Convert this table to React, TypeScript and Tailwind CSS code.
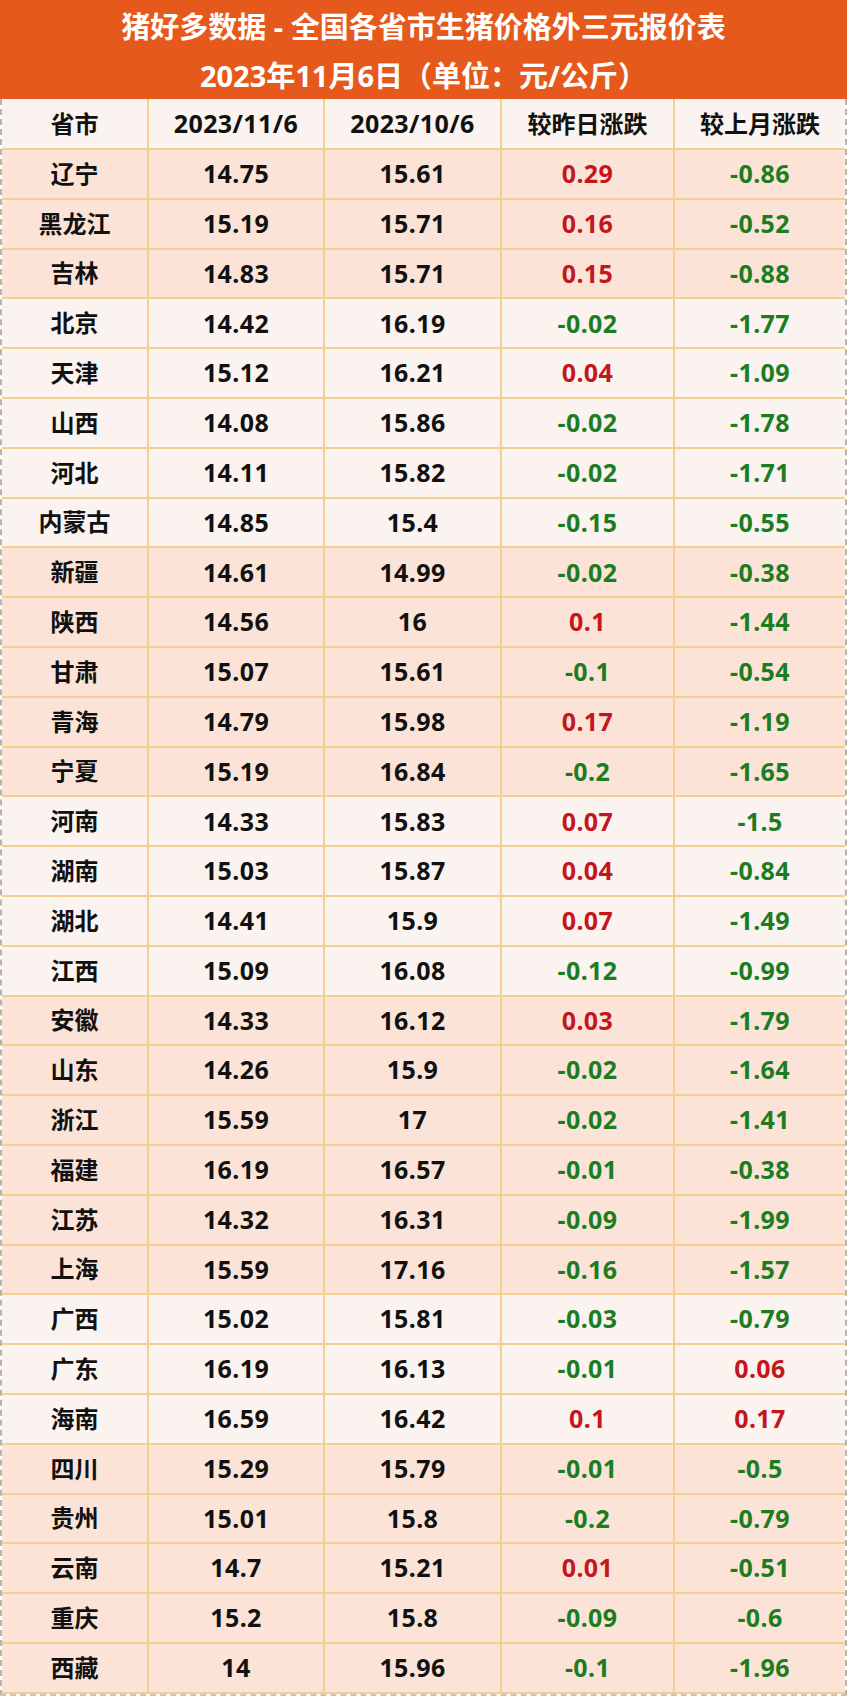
import React from 'react';

type Row = [string, string, string, string, string];

const rows: Row[] = [
  ['辽宁', '14.75', '15.61', '0.29', '-0.86'],
  ['黑龙江', '15.19', '15.71', '0.16', '-0.52'],
  ['吉林', '14.83', '15.71', '0.15', '-0.88'],
  ['北京', '14.42', '16.19', '-0.02', '-1.77'],
  ['天津', '15.12', '16.21', '0.04', '-1.09'],
  ['山西', '14.08', '15.86', '-0.02', '-1.78'],
  ['河北', '14.11', '15.82', '-0.02', '-1.71'],
  ['内蒙古', '14.85', '15.4', '-0.15', '-0.55'],
  ['新疆', '14.61', '14.99', '-0.02', '-0.38'],
  ['陕西', '14.56', '16', '0.1', '-1.44'],
  ['甘肃', '15.07', '15.61', '-0.1', '-0.54'],
  ['青海', '14.79', '15.98', '0.17', '-1.19'],
  ['宁夏', '15.19', '16.84', '-0.2', '-1.65'],
  ['河南', '14.33', '15.83', '0.07', '-1.5'],
  ['湖南', '15.03', '15.87', '0.04', '-0.84'],
  ['湖北', '14.41', '15.9', '0.07', '-1.49'],
  ['江西', '15.09', '16.08', '-0.12', '-0.99'],
  ['安徽', '14.33', '16.12', '0.03', '-1.79'],
  ['山东', '14.26', '15.9', '-0.02', '-1.64'],
  ['浙江', '15.59', '17', '-0.02', '-1.41'],
  ['福建', '16.19', '16.57', '-0.01', '-0.38'],
  ['江苏', '14.32', '16.31', '-0.09', '-1.99'],
  ['上海', '15.59', '17.16', '-0.16', '-1.57'],
  ['广西', '15.02', '15.81', '-0.03', '-0.79'],
  ['广东', '16.19', '16.13', '-0.01', '0.06'],
  ['海南', '16.59', '16.42', '0.1', '0.17'],
  ['四川', '15.29', '15.79', '-0.01', '-0.5'],
  ['贵州', '15.01', '15.8', '-0.2', '-0.79'],
  ['云南', '14.7', '15.21', '0.01', '-0.51'],
  ['重庆', '15.2', '15.8', '-0.09', '-0.6'],
  ['西藏', '14', '15.96', '-0.1', '-1.96'],
];

// regions alternate pink / light background
const lightRows = new Set([3, 4, 5, 6, 7, 13, 14, 15, 16, 23, 24, 25]);

const gridCols = 'grid grid-cols-[147px_176px_177px_173px_1fr]';
const cellBase = 'flex items-center justify-center border-r-2 border-b-2 border-[#f4cf8f] last:border-r-0';

function Cell({ children, className = '' }: { children: React.ReactNode; className?: string }) {
  return <div className={`${cellBase} ${className}`}>{children}</div>;
}

function changeColor(v: string) {
  return v.startsWith('-') ? 'text-[#1b7d1f]' : 'text-[#c4161c]';
}

const num = 'text-[25px] tracking-[0.4px]';

export default function App() {
  return (
    <div
      className="w-[847px] h-[1699px] bg-white font-bold text-[24px] text-[#111]"
      style={{ fontFamily: '"Noto Sans", "Noto Sans CJK SC", sans-serif' }}
    >
      <header className="h-[99px] bg-[#e55a1c] text-white text-[29px] leading-none flex flex-col items-center justify-center gap-[20px] pt-[2px]">
        <div>猪好多数据 - 全国各省市生猪价格外三元报价表</div>
        <div>2023年11月6日（单位：元/公斤）</div>
      </header>
      <div className="border-x-2 border-b-2 border-dashed border-x-[#b9b3ae] border-b-[#c9c3be]">
        <div className={`${gridCols} h-[51px] bg-[#faf3ef]`}>
          <Cell>省市</Cell>
          <Cell className={num}>2023/11/6</Cell>
          <Cell className={num}>2023/10/6</Cell>
          <Cell>较昨日涨跌</Cell>
          <Cell>较上月涨跌</Cell>
        </div>
        {rows.map((r, i) => (
          <div
            key={r[0]}
            className={`${gridCols} h-[49.8px] ${lightRows.has(i) ? 'bg-[#faf3ef]' : 'bg-[#fbe3d7]'}`}
          >
            <Cell>{r[0]}</Cell>
            <Cell className={num}>{r[1]}</Cell>
            <Cell className={num}>{r[2]}</Cell>
            <Cell className={`${num} ${changeColor(r[3])}`}>{r[3]}</Cell>
            <Cell className={`${num} ${changeColor(r[4])}`}>{r[4]}</Cell>
          </div>
        ))}
      </div>
    </div>
  );
}
